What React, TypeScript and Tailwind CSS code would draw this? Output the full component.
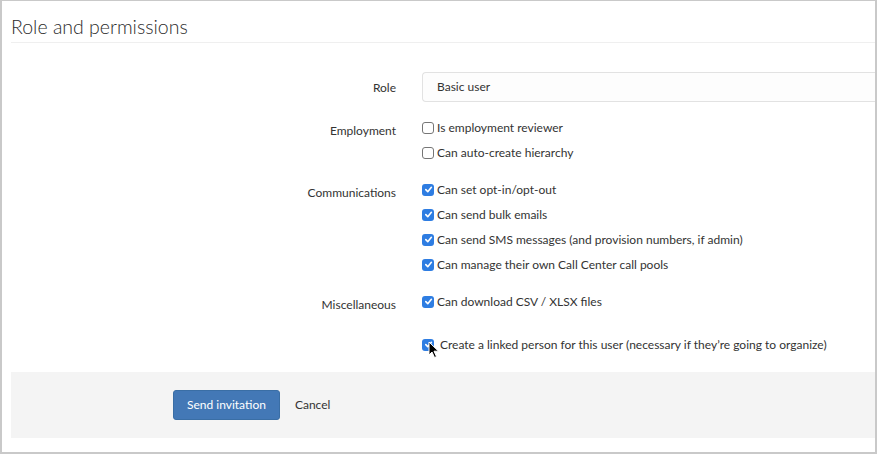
import React from "react";

const font = { fontFamily: "Lato, 'Noto Sans', 'Liberation Sans', sans-serif" };

function Box({ checked }: { checked: boolean }) {
  if (checked) {
    return (
      <span className="flex h-[12px] w-[12px] shrink-0 items-center justify-center rounded-[3px] bg-[#2e7de2]">
        <svg width="9" height="9" viewBox="0 0 10 10" fill="none">
          <path d="M2 5.2 L4.2 7.4 L8.2 2.6" stroke="#fff" strokeWidth="1.8" strokeLinecap="round" strokeLinejoin="round" />
        </svg>
      </span>
    );
  }
  return <span className="h-[12px] w-[12px] shrink-0 rounded-[3px] border border-[#767676] bg-white" />;
}

function Check({ label, checked = false }: { label: string; checked?: boolean }) {
  return (
    <label className="flex h-[25px] items-center gap-[3px] text-[12px] text-[#333]">
      <Box checked={checked} />
      <span>{label}</span>
    </label>
  );
}

function Row({ label, children, className = "" }: { label: string; children: React.ReactNode; className?: string }) {
  return (
    <div className={"grid grid-cols-[385px_1fr] gap-[26px] " + className}>
      <div className="pt-[7px] text-right text-[12px] text-[#333]">{label}</div>
      <div>{children}</div>
    </div>
  );
}

export default function App() {
  return (
    <div
      style={font}
      className="relative h-[454px] w-[877px] overflow-hidden border-2 border-t border-[#c9c9c9] bg-white"
    >
      <div className="pl-[9px]">
        <h2 className="border-b border-[#efefef] pb-[2px] pt-[12px] text-[19.5px] leading-[27px] font-light text-[#2b2b2b]">
          Role and permissions
        </h2>

        <div className="pt-[29px]">
          <div className="grid grid-cols-[385px_1fr] gap-[26px]">
            <div className="pt-[7px] text-right text-[12px] text-[#333]">Role</div>
            <div className="flex h-[30px] items-center rounded-l-[4px] border border-r-0 border-[#e2e2e2] bg-[#fdfdfd] pl-[14px] text-[12px] text-[#333]">
              Basic user
            </div>
          </div>

          <Row label="Employment" className="mt-[13px]">
            <Check label="Is employment reviewer" />
            <Check label="Can auto-create hierarchy" />
          </Row>

          <Row label="Communications" className="mt-[12px]">
            <Check label="Can set opt-in/opt-out" checked />
            <Check label="Can send bulk emails" checked />
            <Check label="Can send SMS messages (and provision numbers, if admin)" checked />
            <Check label="Can manage their own Call Center call pools" checked />
          </Row>

          <Row label="Miscellaneous" className="mt-[12px]">
            <Check label="Can download CSV / XLSX files" checked />
          </Row>

          <Row label="" className="mt-[18px]">
            <div className="relative">
              <label className="flex h-[25px] items-center gap-[6px] text-[12px] text-[#333]">
                <Box checked />
                <span>Create a linked person for this user (necessary if they’re going to organize)</span>
              </label>
              <svg
                className="absolute left-[6px] top-[9px]"
                width="12"
                height="18"
                viewBox="0 0 12 18"
              >
                <path d="M1 1 L1 14 L4 11 L6.5 16.5 L8.5 15.6 L6 10.2 L10.5 10.2 Z" fill="#000" stroke="#fff" strokeWidth="1" strokeLinejoin="round" />
              </svg>
            </div>
          </Row>
        </div>

        <div className="mt-[15px] flex h-[66px] items-center bg-[#f4f4f4] pl-[162px]">
          <button className="h-[30px] rounded-[3px] border border-[#3a6ea5] bg-[#4378b6] px-[13px] text-[12px] text-white">
            Send invitation
          </button>
          <span className="ml-[15px] text-[12px] text-[#333]">Cancel</span>
        </div>
      </div>
    </div>
  );
}
